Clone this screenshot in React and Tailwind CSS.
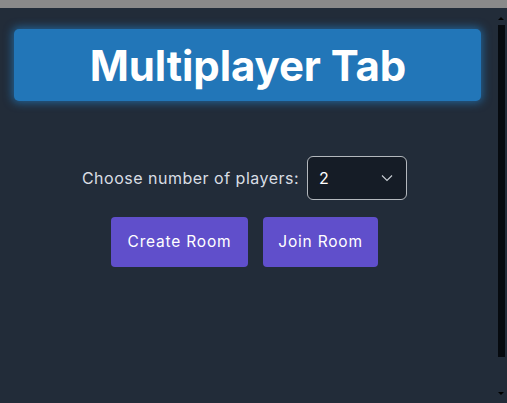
import React from "react";

function Chevron() {
  return (
    <svg width="12" height="12" viewBox="0 0 12 12" fill="none" stroke="#c9ced4" strokeWidth="1.1">
      <path d="M1 3.5 L6 8.5 L11 3.5" />
    </svg>
  );
}

function Scrollbar() {
  return (
    <div className="w-3 flex flex-col items-center">
      <div className="h-3 flex items-end justify-center">
        <div className="w-0 h-0 border-l-[3px] border-r-[3px] border-b-[3px] border-l-transparent border-r-transparent border-b-black" />
      </div>
      <div className="mt-[5px] w-[7px] h-[332px] bg-[#060a0f]" />
      <div className="flex-1" />
      <div className="h-3 flex items-start justify-center pt-[1px]">
        <div className="w-0 h-0 border-l-[3px] border-r-[3px] border-t-[3px] border-l-transparent border-r-transparent border-t-black" />
      </div>
    </div>
  );
}

export default function App() {
  return (
    <div className="w-[507px] h-[403px] flex flex-col bg-[#222c39] overflow-hidden" style={{ fontFamily: "Inter, 'Noto Sans', sans-serif" }}>
      <div className="h-2 bg-[#8a8a8a]" />
      <div className="flex-1 flex">
        <div className="flex-1 px-[14px] pt-[21px]">
          <div className="h-[72px] rounded-[5px] bg-[#2276b8] shadow-[0_0_8px_2px_rgba(34,118,184,0.7)] flex items-center justify-center pr-[2px]">
            <h1 className="text-[42px] font-bold text-white tracking-[-0.1px] pl-[3px]">Multiplayer Tab</h1>
          </div>
          <div className="mt-[55px] flex items-center justify-center gap-2 pr-[6px]">
            <span className="text-[16px] tracking-[0.5px] text-[#d9dee4]">Choose number of players:</span>
            <div className="w-[100px] h-[44px] rounded-[6px] border border-[#b3b8bd] bg-[#151c26] flex items-center justify-between pl-[11px] pr-[13px]">
              <span className="text-[16px] text-white">2</span>
              <Chevron />
            </div>
          </div>
          <div className="mt-[17px] flex justify-center gap-[15px] pr-[6px]">
            <button className="w-[137px] h-[50px] rounded-[4px] bg-[#604fcb] text-white text-[15.5px] tracking-[0.8px]">Create Room</button>
            <button className="w-[115px] h-[50px] rounded-[4px] bg-[#604fcb] text-white text-[15.5px] tracking-[0.8px]">Join Room</button>
          </div>
        </div>
        <Scrollbar />
      </div>
    </div>
  );
}
